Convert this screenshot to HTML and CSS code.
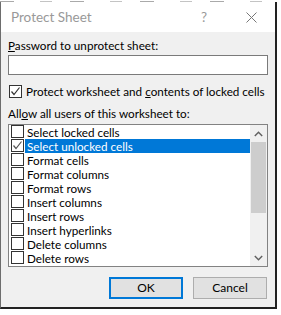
FILE: index.html
```html
<!DOCTYPE html>
<html>
<head>
<meta charset="utf-8">
<link rel="stylesheet" href="styles.css">
</head>
<body>
<div class="backdrop"></div>
<div class="dialog">
  <div class="titlebar">
    <span class="title">Protect Sheet</span>
    <span class="help">?</span>
    <svg class="close" width="11" height="11" viewBox="0 0 11 11"><path d="M0.5 0.5 L10.5 10.5 M10.5 0.5 L0.5 10.5" stroke="#777" stroke-width="1" fill="none"/></svg>
  </div>
  <div class="body">
    <div class="lbl"><u>P</u>assword to unprotect sheet:</div>
    <div class="input"></div>
    <div class="chk-row">
      <span class="cb"><svg width="11" height="11" viewBox="0 0 11 11"><path d="M1.5 5.5 L4 8.5 L9.5 1.5" stroke="#333" stroke-width="1.2" fill="none"/></svg></span>
      <span>Protect worksheet and <u>c</u>ontents of locked cells</span>
    </div>
    <div class="lbl allow">All<u>o</u>w all users of this worksheet to:</div>
    <div class="list">
      <div class="items">
        <div class="row"><span class="cb"></span><span class="txt">Select locked cells</span></div>
        <div class="row sel"><span class="cb"><svg width="11" height="11" viewBox="0 0 11 11"><path d="M1.5 5.5 L4 8.5 L9.5 1.5" stroke="#555" stroke-width="1.2" fill="none"/></svg></span><span class="txt">Select unlocked cells</span></div>
        <div class="row"><span class="cb"></span><span class="txt">Format cells</span></div>
        <div class="row"><span class="cb"></span><span class="txt">Format columns</span></div>
        <div class="row"><span class="cb"></span><span class="txt">Format rows</span></div>
        <div class="row"><span class="cb"></span><span class="txt">Insert columns</span></div>
        <div class="row"><span class="cb"></span><span class="txt">Insert rows</span></div>
        <div class="row"><span class="cb"></span><span class="txt">Insert hyperlinks</span></div>
        <div class="row"><span class="cb"></span><span class="txt">Delete columns</span></div>
        <div class="row"><span class="cb"></span><span class="txt">Delete rows</span></div>
      </div>
      <div class="scrollbar">
        <div class="arrow"><svg width="9" height="6" viewBox="0 0 9 6"><path d="M0.8 5 L4.5 1.2 L8.2 5" stroke="#606060" stroke-width="1.4" fill="none"/></svg></div>
        <div class="thumb"></div>
        <div class="spacer"></div>
        <div class="arrow"><svg width="9" height="6" viewBox="0 0 9 6"><path d="M0.8 1 L4.5 4.8 L8.2 1" stroke="#606060" stroke-width="1.4" fill="none"/></svg></div>
      </div>
    </div>
    <div class="buttons">
      <div class="btn ok">OK</div>
      <div class="btn">Cancel</div>
    </div>
  </div>
</div>
</body>
</html>
```
FILE: styles.css
```css
html, body {
  margin: 0;
  padding: 0;
  background: #ffffff;
}
body {
  width: 281px;
  height: 315px;
  overflow: hidden;
  font-family: Lato, "Noto Sans", sans-serif;
  font-size: 11.7px;
  color: #000;
}
.backdrop {
  height: 1px;
  margin-top: 1px;
  width: 277px;
  background: repeating-linear-gradient(90deg, #555 0 14px, transparent 14px 40px, #888 40px 52px, transparent 52px 70px);
  opacity: 0.5;
}
.dialog {
  width: 274px;
  height: 305px;
  border-left: 1px solid #6d6d6d;
  border-right: 2px solid #222;
  border-bottom: 2px solid #222;
  background: #f0f0f0;
  display: flex;
  flex-direction: column;
}
.titlebar {
  height: 30px;
  background: #fff;
  display: flex;
  align-items: center;
}
.title {
  margin-left: 10px;
  font-size: 13.5px;
  color: #999;
  flex: 1;
  padding-bottom: 1px;
}
.help {
  font-size: 13.5px;
  color: #999;
  margin-right: 39px;
}
.close {
  margin-right: 18px;
  margin-top: 1px;
}
.body {
  padding: 0 6px 0 7px;
  display: flex;
  flex-direction: column;
}
.lbl {
  margin-top: 6px;
  line-height: 15px;
  height: 15px;
  white-space: nowrap;
}
.allow {
  margin-top: 8px;
}
.input {
  margin-top: 2px;
  width: 258px;
  height: 18px;
  background: #fff;
  border: 1px solid #7a7a7a;
}
.chk-row {
  margin-top: 10px;
  display: flex;
  align-items: center;
  height: 13px;
  line-height: 13px;
  white-space: nowrap;
}
.chk-row .cb {
  margin-left: 1px;
  margin-right: 4px;
}
.cb {
  width: 11px;
  height: 11px;
  border: 1px solid #333;
  background: #fff;
  display: inline-flex;
  align-items: center;
  justify-content: center;
  flex: none;
}
.list {
  margin-top: 3px;
  width: 258px;
  height: 141px;
  border: 1px solid #828282;
  background: #fff;
  display: flex;
}
.items {
  flex: 1;
  display: flex;
  flex-direction: column;
}
.row {
  height: 14px;
  display: flex;
  align-items: flex-start;
  padding-left: 2px;
}
.txt {
  margin-left: 1px;
  padding-left: 2px;
  flex: 1;
  line-height: 14px;
  height: 14px;
  white-space: nowrap;
}
.row.sel .txt {
  background: #0078d7;
  color: #fff;
}
.scrollbar {
  width: 17px;
  background: #f0f0f0;
  display: flex;
  flex-direction: column;
  align-items: center;
}
.arrow {
  height: 17px;
  width: 17px;
  display: flex;
  align-items: center;
  justify-content: center;
}
.thumb {
  width: 15px;
  height: 71px;
  background: #cdcdcd;
}
.spacer {
  flex: 1;
}
.buttons {
  margin-top: 10px;
  display: flex;
  justify-content: flex-end;
  gap: 10px;
  padding-right: 2px;
}
.btn {
  width: 72px;
  height: 20px;
  border: 1px solid #adadad;
  background: #e1e1e1;
  text-align: center;
  line-height: 20px;
  font-size: 12px;
}
.btn.ok {
  width: 70px;
  height: 18px;
  border: 2px solid #0078d7;
  line-height: 18px;
}
```
